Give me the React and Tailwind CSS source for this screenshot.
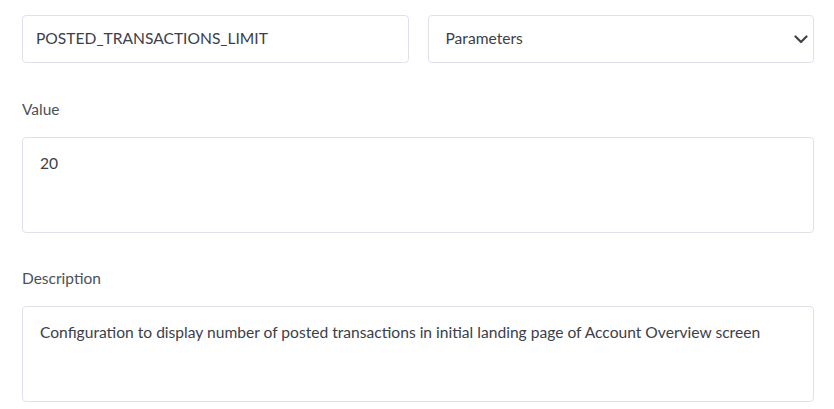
import React from "react";

const Field = ({ label, value, className }) => (
  <div className={className}>
    <label className="block h-5 text-[15.5px] leading-5 text-[#4b5159]">{label}</label>
    <div className="mt-[18px] h-[96px] rounded border border-[#dfe2ea] bg-white px-[17px] pt-[15px] text-[15.6px] leading-5 text-[#3b4049]">
      {value}
    </div>
  </div>
);

const Chevron = () => (
  <svg width="14" height="9" viewBox="0 0 14 9" fill="none">
    <path d="M1.5 1.5 7 7l5.5-5.5" stroke="#3f434b" strokeWidth="2.2" strokeLinecap="round" strokeLinejoin="round" />
  </svg>
);

const App = () => {
  return (
    <div
      className="min-h-[409px] bg-white pl-[22px] pr-[20px] pt-[15px]"
      style={{ fontFamily: "Lato, 'Noto Sans', sans-serif" }}
    >
      <div className="grid grid-cols-2 gap-[19px]">
        <div className="flex h-[48px] items-center rounded border border-[#dfe2ea] bg-white px-[13px] text-[15.6px] text-[#3b4049]">
          POSTED_TRANSACTIONS_LIMIT
        </div>
        <div className="flex h-[48px] items-center justify-between rounded border border-[#dfe2ea] bg-white pl-[17px] pr-[5px] text-[15.6px] text-[#3b4049]">
          <span>Parameters</span>
          <Chevron />
        </div>
      </div>
      <Field className="mt-[36px]" label="Value" value="20" />
      <Field
        className="mt-[35px]"
        label="Description"
        value="Configuration to display number of posted transactions in initial landing page of Account Overview screen"
      />
    </div>
  );
};

export default App;
